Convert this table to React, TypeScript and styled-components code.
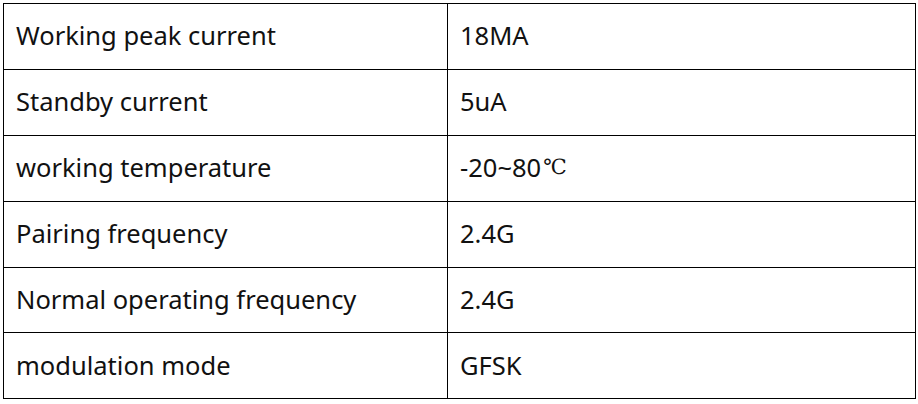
import React from 'react';
import styled, { createGlobalStyle } from 'styled-components';

const GlobalStyle = createGlobalStyle`
    html, body {
        margin: 0;
        padding: 0;
        background: #ffffff;
    }
`

const Page = styled.div`
    padding: 3px 3px 0 3px;
    width: 918px;
    box-sizing: border-box;
`

const Table = styled.div`
    display: grid;
    grid-template-columns: 444px 468px;
    border-top: 1.5px solid #000;
    border-left: 1.5px solid #000;
    width: 913px;
    box-sizing: border-box;
    font-family: "Noto Sans", "Open Sans", sans-serif;
    font-size: 25.5px;
    color: #111;
`

const Cell = styled.div`
    height: 65.9px;
    box-sizing: border-box;
    display: flex;
    align-items: center;
    padding-left: 12px;
    padding-bottom: 2px;
    border-right: 1.5px solid #000;
    border-bottom: 1.5px solid #000;
    white-space: nowrap;
`

const Degree = styled.span`
    font-family: "DejaVu Serif", "Liberation Serif", serif;
    font-size: 21px;
    font-weight: 300;
    margin-left: 2px;
`

const rows: [string, React.ReactNode][] = [
    ['Working peak current', '18MA'],
    ['Standby current', '5uA'],
    ['working temperature', <>-20~80<Degree>℃</Degree></>],
    ['Pairing frequency', '2.4G'],
    ['Normal operating frequency', '2.4G'],
    ['modulation mode', 'GFSK'],
]

export default function App() {
    return (
        <React.Fragment>
            <GlobalStyle />
            <Page>
                <Table>
                    {rows.map(([label, value], i) => (
                        <React.Fragment key={i}>
                            <Cell>{label}</Cell>
                            <Cell>{value}</Cell>
                        </React.Fragment>
                    ))}
                </Table>
            </Page>
        </React.Fragment>
    )
}
